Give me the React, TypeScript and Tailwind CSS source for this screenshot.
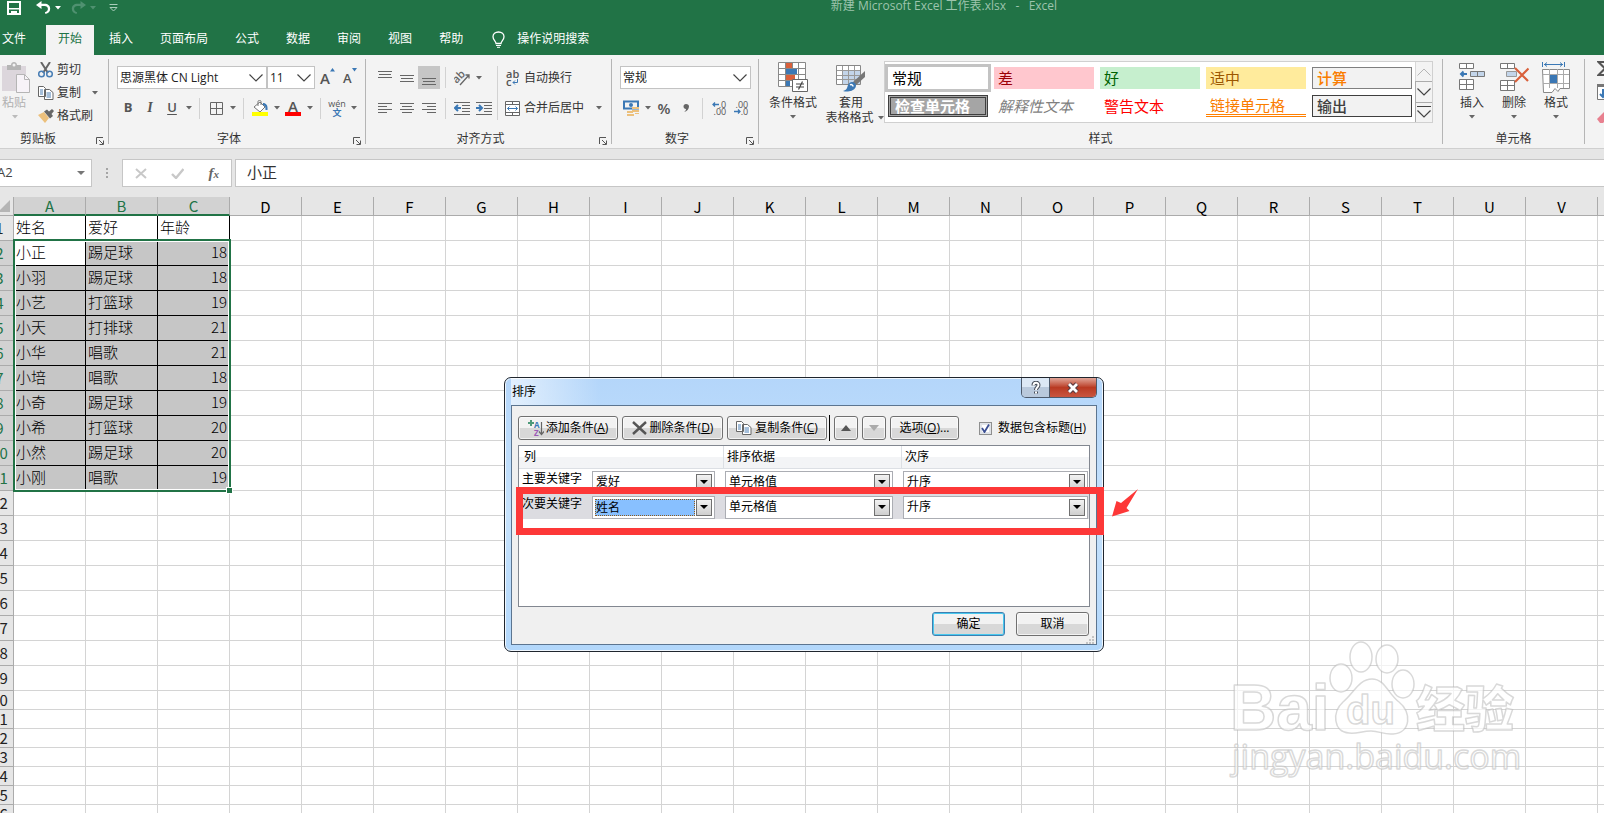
import type { ReactNode } from "react";

const TABS = ["文件", "开始", "插入", "页面布局", "公式", "数据", "审阅", "视图", "帮助"];

const COLUMNS = "ABCDEFGHIJKLMNOPQRSTUVW".split("");

const DATA: string[][] = [
  ["姓名", "爱好", "年龄"],
  ["小正", "踢足球", "18"],
  ["小羽", "踢足球", "18"],
  ["小艺", "打篮球", "19"],
  ["小天", "打排球", "21"],
  ["小华", "唱歌", "21"],
  ["小培", "唱歌", "18"],
  ["小奇", "踢足球", "19"],
  ["小希", "打篮球", "20"],
  ["小然", "踢足球", "20"],
  ["小刚", "唱歌", "19"],
];

const ROWS = Array.from({ length: 26 }, (_, i) => i + 1);

const CELL_STYLES = [
  { label: "常规", cls: "bg-white text-black outline-3 outline-[#c3c3c3]" },
  { label: "差", cls: "bg-[#ffc7ce] text-[#9c0006]" },
  { label: "好", cls: "bg-[#c6efce] text-[#006100]" },
  { label: "适中", cls: "bg-[#ffeb9c] text-[#9c5700]" },
  { label: "计算", cls: "bg-[#f2f2f2] text-[#fa7d00] font-medium border border-[#7f7f7f]" },
  { label: "检查单元格", cls: "bg-[#a5a5a5] text-white font-bold border-3 border-double border-[#3f3f3f]" },
  { label: "解释性文本", cls: "text-[#7f7f7f] italic" },
  { label: "警告文本", cls: "text-[#ff0000]" },
  { label: "链接单元格", cls: "text-[#fa7d00] border-b-3 border-double border-[#ff8001]" },
  { label: "输出", cls: "bg-[#f2f2f2] text-[#3f3f3f] font-medium border border-[#3f3f3f]" },
];

function Svg({ w, h, children }: { w: number; h: number; children: ReactNode }) {
  return (
    <svg width={w} height={h} viewBox={`0 0 ${w} ${h}`} fill="none" className="shrink-0" aria-hidden="true">
      {children}
    </svg>
  );
}

function Caret({ color = "#666" }: { color?: string }) {
  return (
    <Svg w={6} h={4}>
      <path d="M0 0h6L3 3.5z" fill={color} />
    </Svg>
  );
}

function DropButton({ label }: { label: string }) {
  return (
    <button aria-label={label} className="flex h-[22px] w-[11px] items-center justify-center">
      <Caret />
    </button>
  );
}

function IconButton({ label, active = false, children }: { label: string; active?: boolean; children: ReactNode }) {
  return (
    <button
      aria-label={label}
      className={`flex w-[22px] shrink-0 items-center justify-center ${active ? "h-[23px] bg-[#c6c6c6]" : "h-[22px]"}`}
    >
      {children}
    </button>
  );
}

function Sep() {
  return <div className="mx-[5px] h-[21px] w-px shrink-0 bg-[#d2d2d2]" />;
}

function Chevron() {
  return (
    <Svg w={14} h={8}>
      <path d="M.5 .5L7 7l6.500-6.500" stroke="#444" strokeWidth="1.200" />
    </Svg>
  );
}

function RibbonSelect({ label, value, width }: { label: string; value: string; width: string }) {
  return (
    <div className={`relative flex h-[23px] items-center border border-[#c3c3c3] bg-white ${width}`}>
      <select aria-label={label} defaultValue={value} className="h-full w-full appearance-none pl-[2px] text-xs text-[#222] outline-none">
        <option>{value}</option>
      </select>
      <div className="pointer-events-none absolute right-[3px]">
        <Chevron />
      </div>
    </div>
  );
}

function Group({ label, launcher = true, className, children }: { label: string; launcher?: boolean; className: string; children: ReactNode }) {
  return (
    <section aria-label={label} className={`flex h-[93px] shrink-0 flex-col ${className}`}>
      <div className="flex-1">{children}</div>
      <div className="flex h-5 items-center pt-[2px]">
        <span className="flex-1 text-center text-xs leading-4 text-[#333]">{label}</span>
        {launcher && (
          <button aria-label={`${label}设置`} className="flex w-4 justify-center pt-1">
            <Svg w={8} h={8}>
              <path d="M.5 7V.5H7M3 3l4 4M7.500 3.500v4h-4" stroke="#555" />
            </Svg>
          </button>
        )}
      </div>
    </section>
  );
}

function GroupLine() {
  return <div className="mt-1 h-[85px] w-px shrink-0 bg-[#b5b5b5]" />;
}

function Lines({ rows }: { rows: [number, number, number][] }) {
  return (
    <Svg w={14} h={16}>
      {rows.map(([x, y, w]) => (
        <rect key={y} x={x} y={y} width={w} height="1" fill="#666" />
      ))}
    </Svg>
  );
}

function TitleBar() {
  return (
    <header className="flex h-[25px] items-start">
      <div className="flex w-[284px] shrink-0 items-center pl-[7px] pt-px">
        <button aria-label="保存">
          <Svg w={14} h={14}>
            <path d="M1 1h12v12H1z" stroke="#fff" strokeWidth="2" />
            <path d="M2 7h10v1.500H2zM4 10h6v4H8v-2H6v2H4z" fill="#fff" />
          </Svg>
        </button>
        <button aria-label="撤消" className="ml-[15px] flex items-center gap-1">
          <Svg w={15} h={14}>
            <path d="M5.500 0v2.800h3c3.500 0 5.700 2 5.700 5 0 2.800-2 4.600-4.700 5.200l-.6-1.800c1.900-.5 3-1.700 3-3.300 0-1.900-1.300-2.900-3.500-2.900H5.500v3L0 4z" fill="#fff" />
          </Svg>
          <Caret color="#fff" />
        </button>
        <button aria-label="恢复" className="ml-[10px] flex items-center gap-1">
          <Svg w={15} h={14}>
            <path d="M9.500 0v2.800h-3C3 2.800.8 4.800.8 7.800c0 2.800 2 4.600 4.700 5.200l.6-1.800c-1.900-.5-3-1.700-3-3.300C3.100 6 4.400 5 6.600 5h2.900v3L15 4z" fill="#4f9170" />
          </Svg>
          <Caret color="#4f9170" />
        </button>
        <button aria-label="自定义快速访问工具栏" className="ml-[13px]">
          <Svg w={9} h={8}>
            <path d="M.5 .5h8M1 3.500h7L4.500 7z" stroke="#a9cdb9" />
          </Svg>
        </button>
      </div>
      <h1 className="flex-1 text-center text-xs leading-3 text-[#9dc4ad]">
        新建 Microsoft Excel 工作表.xlsx&nbsp;&nbsp; -&nbsp;&nbsp; Excel
      </h1>
    </header>
  );
}

function TabStrip() {
  return (
    <nav className="flex h-[30px] items-stretch gap-[3px] text-xs text-white">
      {TABS.map((tab, i) => (
        <button
          key={tab}
          className={`shrink-0 px-3 pb-[2px] ${i === 0 ? "-ml-[10px] mr-[5px]" : ""} ${i === 1 ? "bg-[#f3f3f3] text-[#217346]" : ""}`}
        >
          {tab}
        </button>
      ))}
      <button className="flex items-center gap-3 pb-[2px] pl-[14px]">
        <Svg w={13} h={17}>
          <path d="M4 12.500c0-2-3-3.500-3-6.700C1 3 3.300 1 6.500 1S12 3 12 5.800c0 3.200-3 4.700-3 6.700z" stroke="#fff" strokeWidth="1.300" />
          <path d="M4 14.500h5M5 16.300h3" stroke="#fff" />
        </Svg>
        操作说明搜索
      </button>
    </nav>
  );
}

function ClipboardGroup() {
  return (
    <Group label="剪贴板" className="-ml-4 w-[124px]">
      <div className="flex pl-[18px] pt-[3px]">
        <button disabled className="flex w-[28px] flex-col items-start pt-1 text-xs leading-4 text-[#b1b1b1]">
          <Svg w={28} h={32}>
            <path d="M0 4h24v25H0z" fill="#dcd6dc" />
            <path d="M5 3h4c0-4 6-4 6 0h4v5H5z" fill="#b5b5b5" />
            <circle cx="12" cy="3" r="1.500" fill="#f3f3f3" />
            <path d="M14.500 12.500h8l5 5v13h-13z" fill="#f7f3f8" stroke="#b5b5b5" />
            <path d="M22.500 12.500v5h5" stroke="#b5b5b5" />
          </Svg>
          <span className="pt-px">粘贴</span>
          <span className="flex w-[26px] justify-center pt-1">
            <Caret color="#bbb" />
          </span>
        </button>
        <div className="ml-2 flex flex-col text-xs text-[#333]">
          <button className="flex h-[23px] items-center gap-[3px]">
            <Svg w={16} h={16}>
              <path d="M3 0l7 11M12 0L5 11" stroke="#666" strokeWidth="2" />
              <circle cx="3.500" cy="12" r="2.800" stroke="#4a7fb5" strokeWidth="1.500" />
              <circle cx="11.500" cy="12" r="2.800" stroke="#4a7fb5" strokeWidth="1.500" />
            </Svg>
            剪切
          </button>
          <button className="flex h-[23px] items-center gap-[3px]">
            <CopyIcon />
            复制
            <span className="pl-2">
              <Caret />
            </span>
          </button>
          <button className="flex h-[23px] items-center gap-[3px]">
            <Svg w={16} h={16}>
              <path d="M0 7l6-3 5 6-4 5z" fill="#ecc07c" />
              <path d="M6 3.500l3-2 2 2L14 1l2 2-2.500 3 1.500 2-3 2.500z" fill="#666" />
            </Svg>
            格式刷
          </button>
        </div>
      </div>
    </Group>
  );
}

function CopyIcon() {
  return (
    <Svg w={16} h={14}>
      <path d="M.5 .5h5l2 2v8h-7zM6.500 3.500h5l3.500 3v7H6.500z" fill="#fff" stroke="#666" />
      <path d="M2 4h3M2 6h3M2 8h3M8.500 7h4.500M8.500 9h4.500M8.500 11h4.500" stroke="#4a7fb5" />
    </Svg>
  );
}

function FontGroup() {
  return (
    <Group label="字体" className="w-[256px]">
      <div className="flex flex-col gap-2 pl-2 pt-[11px] text-[#555]">
        <div className="flex items-center">
          <RibbonSelect label="字体名称" value="思源黑体 CN Light" width="w-[150px]" />
          <RibbonSelect label="字号" value="11" width="w-[48px]" />
          <button aria-label="增大字号" className="ml-[5px] flex w-[22px] items-start">
            <span className="text-[15px] font-semibold leading-5">A</span>
            <Svg w={5} h={4}><path d="M0 3.500L2.500 0 5 3.500z" fill="#3b78b5" /></Svg>
          </button>
          <button aria-label="减小字号" className="flex w-[22px] items-start pl-px">
            <span className="text-[13px] font-semibold leading-5">A</span>
            <Svg w={5} h={4}><path d="M0 0h5L2.500 3.500z" fill="#3b78b5" /></Svg>
          </button>
        </div>
        <div className="flex items-center">
          <IconButton label="加粗"><b className="text-[13px]">B</b></IconButton>
          <IconButton label="倾斜"><i className="font-['Liberation_Serif',serif] text-sm font-bold">I</i></IconButton>
          <IconButton label="下划线"><span className="text-[13px] font-semibold underline underline-offset-2">U</span></IconButton>
          <DropButton label="下划线选项" />
          <Sep />
          <IconButton label="边框">
            <Svg w={13} h={13}><path d="M.5 .5h12v12H.5zM6.500 1v11M1 6.500h11" stroke="#666" /></Svg>
          </IconButton>
          <DropButton label="边框选项" />
          <Sep />
          <IconButton label="填充颜色">
            <Svg w={16} h={16}>
              <path d="M2 7l6-5 5 5-5 5z" fill="#fff" stroke="#777" />
              <path d="M6 6V1.500c0-1.500 3-1.500 3 0V5" stroke="#777" />
              <path d="M11 3c3 0 5 2 4.500 7h-2c0-3 0-4-2.500-5z" fill="#3b78b5" />
              <path d="M0 12h16v4H0z" fill="#ff0" />
            </Svg>
          </IconButton>
          <DropButton label="填充颜色选项" />
          <IconButton label="字体颜色">
            <span className="flex w-4 flex-col items-center border-b-4 border-[#f00] text-[15px] font-semibold leading-3">A</span>
          </IconButton>
          <DropButton label="字体颜色选项" />
          <Sep />
          <IconButton label="拼音指南">
            <span className="flex flex-col items-center text-[9px] leading-[9px]">
              <span>wén</span>
              <span className="font-bold text-[#3b78b5]">文</span>
            </span>
          </IconButton>
          <DropButton label="拼音指南选项" />
        </div>
      </div>
    </Group>
  );
}

function AlignGroup() {
  return (
    <Group label="对齐方式" className="w-[245px]">
      <div className="flex pl-2 pt-[11px]">
        <div className="flex flex-col gap-2">
          <div className="flex h-[23px] items-center">
            <IconButton label="顶端对齐"><Lines rows={[[0, 1, 14], [1, 4, 12], [0, 7, 14]]} /></IconButton>
            <IconButton label="垂直居中"><Lines rows={[[0, 5, 14], [1, 8, 12], [0, 11, 14]]} /></IconButton>
            <IconButton label="底端对齐" active><Lines rows={[[0, 8, 14], [1, 11, 12], [0, 14, 14]]} /></IconButton>
            <Sep />
            <IconButton label="方向">
              <Svg w={16} h={16}>
                <text x="0" y="10" fontSize="11" fontWeight="600" fill="#666" transform="rotate(-45 6 9)">ab</text>
                <path d="M6 15L15 5M11.500 5H15v3.500" stroke="#666" strokeWidth="1.300" />
              </Svg>
            </IconButton>
            <DropButton label="方向选项" />
          </div>
          <div className="flex items-center">
            <IconButton label="左对齐"><Lines rows={[[0, 3, 14], [0, 6, 9], [0, 9, 14], [0, 12, 9]]} /></IconButton>
            <IconButton label="居中"><Lines rows={[[0, 3, 14], [2, 6, 10], [0, 9, 14], [2, 12, 10]]} /></IconButton>
            <IconButton label="右对齐"><Lines rows={[[0, 3, 14], [5, 6, 9], [0, 9, 14], [5, 12, 9]]} /></IconButton>
            <Sep />
            <IconButton label="减少缩进量">
              <Svg w={16} h={14}>
                <path d="M0 1.500h16M8 4.500h8M8 7.500h8M8 10.500h8M0 13.500h16" stroke="#666" />
                <path d="M7 7H1M4 4L1 7l3 3" stroke="#3b78b5" strokeWidth="2" />
              </Svg>
            </IconButton>
            <IconButton label="增加缩进量">
              <Svg w={16} h={14}>
                <path d="M0 1.500h16M8 4.500h8M8 7.500h8M8 10.500h8M0 13.500h16" stroke="#666" />
                <path d="M0 7h6M3 4l3 3-3 3" stroke="#3b78b5" strokeWidth="2" />
              </Svg>
            </IconButton>
          </div>
        </div>
        <div className="mx-[2px] h-[54px] w-px bg-[#d2d2d2]" />
        <div className="flex flex-col gap-2 pl-[5px] text-xs text-[#333]">
          <button className="flex h-[23px] items-center gap-1">
            <Svg w={15} h={16}>
              <text x="1" y="8" fontSize="11" fontWeight="600" fill="#555">ab</text>
              <text x="1" y="16" fontSize="11" fontWeight="600" fill="#555">c</text>
              <path d="M12.500 9v3.500H8M10 10.500l-2 2 2 2" stroke="#3b78b5" />
            </Svg>
            自动换行
          </button>
          <button className="flex h-[22px] items-center gap-1">
            <Svg w={15} h={15}>
              <path d="M.5 .5h14v14H.5zM.5 3.500h14M.5 11.500h14M7.500 .5v3M7.500 11.500v3" fill="#fff" stroke="#666" />
              <path d="M2.500 7.500h10M4.500 5.500l-2 2 2 2M10.500 5.500l2 2-2 2" stroke="#3b78b5" />
            </Svg>
            合并后居中
            <span className="pl-2"><Caret /></span>
          </button>
        </div>
      </div>
    </Group>
  );
}

function NumberGroup() {
  return (
    <Group label="数字" className="w-[146px]">
      <div className="flex flex-col gap-2 pl-2 pt-[11px] text-[#555]">
        <RibbonSelect label="数字格式" value="常规" width="w-[131px]" />
        <div className="flex items-center">
          <IconButton label="会计数字格式">
            <Svg w={16} h={16}>
              <path d="M1 1.500h14v7H1z" stroke="#3b78b5" strokeWidth="2" />
              <circle cx="8" cy="5" r="2" fill="#3b78b5" />
              <path d="M9 7h7v2H9zM9 10h7v2H9zM4 11h6v2H4zM4 14h7v2H4zM12 13h4v1h-4z" fill="#ecc07c" />
            </Svg>
          </IconButton>
          <DropButton label="会计格式选项" />
          <IconButton label="百分比样式"><span className="text-[15px] font-semibold">%</span></IconButton>
          <IconButton label="千位分隔样式">
            <Svg w={6} h={8}><path d="M3 0c2 0 3 1 3 2.500C6 5 4 7.500 1 8 2.500 7 3 6 3 5 1.500 5 .5 4 .5 2.500S1.500 0 3 0z" fill="#666" /></Svg>
          </IconButton>
          <Sep />
          <IconButton label="增加小数位数">
            <span className="flex flex-col items-end text-[9px] leading-[7px]">
              <span className="flex items-center">
                <Svg w={7} h={5}><path d="M7 2.500H1M3 .5l-2 2 2 2" stroke="#3b78b5" strokeWidth="1.300" /></Svg>.0
              </span>
              <span>.00</span>
            </span>
          </IconButton>
          <IconButton label="减少小数位数">
            <span className="flex flex-col items-end text-[9px] leading-[7px]">
              <span>.00</span>
              <span className="flex items-center">
                <Svg w={7} h={5}><path d="M0 2.500h6M4 .5l2 2-2 2" stroke="#3b78b5" strokeWidth="1.300" /></Svg>.0
              </span>
            </span>
          </IconButton>
        </div>
      </div>
    </Group>
  );
}

function StylesGroup() {
  return (
    <Group label="样式" launcher={false} className="w-[683px]">
      <div className="flex pl-[9px] pt-[6px] text-xs leading-4 text-[#333]">
        <button className="flex w-[50px] shrink-0 flex-col items-center whitespace-nowrap pt-px">
          <Svg w={30} h={33}>
            <path d="M.5 .5h27v24H.5z" fill="#fff" />
            <path d="M8 1h6v5H8z" fill="#d9603b" />
            <path d="M8 7h11v5H8z" fill="#3b78b5" />
            <path d="M8 13h9v5H8z" fill="#d9603b" />
            <path d="M8 19h4v5H8z" fill="#3b78b5" />
            <path d="M.5 .5h27v24H.5zM7.500 1v23M14.500 1v5M20.500 1v23M1 6.500h26M1 12.500h26M1 18.500h26" stroke="#888" />
            <path d="M14.500 17.500h15v12h-15z" fill="#fff" stroke="#666" />
            <path d="M18 22h8M18 25h8M24.500 19.500l-4 8" stroke="#444" strokeWidth="1.200" />
          </Svg>
          <span>条件格式</span>
          <span className="flex h-3 items-center"><Caret /></span>
        </button>
        <button className="flex w-[66px] shrink-0 flex-col items-center whitespace-nowrap pt-px">
          <Svg w={30} h={33}>
            <path d="M.5 3.500h24v19H.5z" fill="#fff" stroke="#888" />
            <path d="M7 8h17v14H7z" fill="#c3d5ea" />
            <path d="M6.500 4v18M12.500 4v18M18.500 4v18M1 8.500h23M1 13.500h23M1 17.500h23" stroke="#999" />
            <path d="M29 9v6L19 24l-3-3z" fill="#777" />
            <path d="M16 20c3 0 5 3 3.500 5.500C17 30 10 30 7 29c4-1 4-3 5-6 .8-2 2.500-3 4-3z" fill="#3b78b5" />
            <path d="M14 23c1.500-1 3 0 3 1.500" stroke="#fff" strokeWidth="1.500" />
          </Svg>
          <span>套用</span>
          <span className="flex h-[14px] items-center gap-1 pl-[7px]">表格格式 <Caret /></span>
        </button>
        <div className="flex h-[62px] shrink-0 border border-[#d0d0d0] bg-white font-['Noto_Sans_CJK_SC',sans-serif]">
          <div className="grid grid-cols-5 content-start gap-[6px] px-[3px] pt-[5px]">
            {CELL_STYLES.map((s) => (
              <button key={s.label} className={`flex h-[22px] w-[100px] items-center px-1 text-[15px] ${s.cls}`}>
                {s.label}
              </button>
            ))}
          </div>
          <div className="flex w-[17px] flex-col bg-[#f3f3f3]">
            <button aria-label="上一行" className="flex flex-1 items-center justify-center border-l border-[#d8d8d8]">
              <Svg w={14} h={8}><path d="M.5 7.500L7 1l6.500 6.500" stroke="#b5b5b5" /></Svg>
            </button>
            <button aria-label="下一行" className="flex flex-1 items-center justify-center border border-r-0 border-[#ababab]">
              <Chevron />
            </button>
            <button aria-label="其他样式" className="flex flex-1 items-center justify-center border-l border-[#ababab]">
              <Svg w={14} h={12}><path d="M0 .5h14M.5 4.500L7 11l6.500-6.500" stroke="#444" strokeWidth="1.200" /></Svg>
            </button>
          </div>
        </div>
      </div>
    </Group>
  );
}

function CellsButton({ label, children }: { label: string; children: ReactNode }) {
  return (
    <button className="flex w-[42px] flex-col items-center">
      {children}
      <span>{label}</span>
      <span className="flex h-3 items-center"><Caret /></span>
    </button>
  );
}

function CellsGroup() {
  return (
    <Group label="单元格" launcher={false} className="w-[141px]">
      <div className="flex pl-2 pt-[7px] text-xs leading-4 text-[#333]">
        <CellsButton label="插入">
          <Svg w={28} h={33}>
            <path d="M1.500 1.500h14v5h-14zM8.500 1.500v5M1.500 17.500h14v10h-14zM8.500 17.500v10M1.500 22.500h14" fill="#fff" stroke="#777" />
            <path d="M12.500 9.500h14v5h-14zM19.500 9.500v5" fill="#c3d5ea" stroke="#777" />
            <path d="M9 12H3M5.500 9.500L3 12l2.500 2.500" stroke="#3b78b5" strokeWidth="2" />
          </Svg>
        </CellsButton>
        <CellsButton label="删除">
          <Svg w={30} h={33}>
            <path d="M1.500 1.500h14v5h-14zM8.500 1.500v5M1.500 18.500h14v10h-14zM8.500 18.500v10M1.500 23.500h14" fill="#fff" stroke="#777" />
            <path d="M7.500 9.500h10v5h-10z" fill="#c3d5ea" stroke="#999" />
            <path d="M16 6l13 13M29.500 6.500L16 20" stroke="#d9603b" strokeWidth="2.200" />
          </Svg>
        </CellsButton>
        <CellsButton label="格式">
          <Svg w={28} h={33}>
            <path d="M.5 0v5M22.500 0v5M2 2.500h19M5 .5l-2.500 2L5 4.500M18 .5l2.500 2-2.500 2" stroke="#3b78b5" />
            <path d="M.5 7.500h27v19H18l-2 3-3-3-3 4H1.500z" fill="#fff" stroke="#888" />
            <path d="M7.500 7v19M15.500 7v19M21.500 7v19M1 12.500h26M1 21.500h26" stroke="#aaa" />
            <path d="M8 13h7v8H8z" fill="#3b78b5" />
          </Svg>
        </CellsButton>
      </div>
    </Group>
  );
}

function EditGroup() {
  return (
    <div className="flex w-4 shrink-0 flex-col gap-2 pl-3 pt-[6px]">
      <button aria-label="自动求和">
        <Svg w={16} h={15}><path d="M14 3V1H1.500L8 7.500 1.500 14H14v-2" stroke="#555" strokeWidth="2" /></Svg>
      </button>
      <button aria-label="填充">
        <Svg w={16} h={16}>
          <path d="M.5 .5h15v15H.5z" fill="#fff" stroke="#777" />
          <path d="M0 0h16v3H0z" fill="#777" />
          <path d="M6 5v8M3 10l3 3 3-3" stroke="#3b78b5" strokeWidth="2" />
        </Svg>
      </button>
      <button aria-label="清除">
        <Svg w={16} h={15}><path d="M0 11l9-9 6 4-9 9H3z" fill="#e8808f" /></Svg>
      </button>
    </div>
  );
}

function FormulaBar() {
  return (
    <div className="flex h-12 shrink-0 items-start bg-[#e6e6e6] pt-[10px] text-[#444]">
      <div className="-ml-[10px] flex h-7 w-[102px] shrink-0 items-center border border-[#c6c6c6] bg-white pr-[6px]">
        <input aria-label="名称框" defaultValue="A2" className="w-0 flex-1 pl-[6px] text-[13px] outline-none" />
        <Svg w={8} h={4}><path d="M0 0h8L4 4z" fill="#777" /></Svg>
      </div>
      <div className="flex h-7 w-[30px] shrink-0 items-center justify-center">
        <Svg w={2} h={11}><path d="M0 0h2v2H0zM0 4h2v2H0zM0 8h2v2H0z" fill="#a5a5a5" /></Svg>
      </div>
      <div className="flex h-7 w-[110px] shrink-0 items-center justify-between border border-[#c6c6c6] bg-white px-3">
        <button aria-label="取消编辑">
          <Svg w={12} h={11}><path d="M1 1l10 9M11 1L1 10" stroke="#c8c8c8" strokeWidth="2" /></Svg>
        </button>
        <button aria-label="输入">
          <Svg w={13} h={11}><path d="M1 6l4 4 7.500-9" stroke="#c8c8c8" strokeWidth="2.400" /></Svg>
        </button>
        <button aria-label="插入函数" className="font-['Liberation_Serif',serif] text-[15px] font-bold italic leading-5 text-[#666]">
          f<span className="text-[11px]">x</span>
        </button>
      </div>
      <input
        aria-label="编辑栏"
        defaultValue="小正"
        className="ml-[3px] h-7 min-w-0 flex-1 border border-r-0 border-[#c6c6c6] bg-white pb-1 pl-[11px] font-['Noto_Sans_CJK_SC',sans-serif] text-[15px] text-[#333] outline-none"
      />
    </div>
  );
}

function cellClass(row: number, col: number) {
  const inData = row <= DATA.length && col < 3;
  if (!inData) return "border-[#d4d4d4]";
  const fill = row === 1 || (row === 2 && col === 0) ? "bg-white" : "bg-[#c6c6c6]";
  return `border-black ${fill} ${col === 2 && row > 1 ? "text-right" : ""}`;
}

function Sheet() {
  return (
    <main className="relative flex-1 overflow-hidden bg-white font-['Noto_Sans_CJK_SC',sans-serif] text-[15px] leading-[18px]">
      <table className="-ml-[14px] w-[1684px] table-fixed border-separate border-spacing-0">
        <thead>
          <tr className="h-[19px]">
            <th className="w-7 border-b border-r border-[#ababab] bg-[#e6e6e6] p-0">
              <div className="flex justify-end pr-[3px]">
                <Svg w={12} h={12}><path d="M12 0v12H0z" fill="#b5b5b5" /></Svg>
              </div>
            </th>
            {COLUMNS.map((c, i) => (
              <th
                key={c}
                scope="col"
                className={`w-[72px] border-r p-0 align-bottom font-normal leading-4 ${
                  i < 3 ? "border-b-2 border-r-[#ababab] border-b-[#217346] bg-[#d2d2d2] text-[#217346]" : "border-b border-[#ababab] bg-[#e6e6e6] text-black"
                }`}
              >
                {c}
              </th>
            ))}
          </tr>
        </thead>
        <tbody>
          {ROWS.map((r) => (
            <tr key={r} className={r < 20 ? "h-[25px]" : "h-[19px]"}>
              <th
                scope="row"
                className={`border-b border-r border-[#ababab] p-0 font-normal ${
                  r > 1 && r < 12 ? "bg-[#d2d2d2] text-[#217346]" : "bg-[#e6e6e6] text-[#222]"
                }`}
              >
                {r}
              </th>
              {COLUMNS.map((c, i) => (
                <td key={c} className={`border-b border-r px-[2px] py-0 align-top font-light text-black ${cellClass(r, i)}`}>
                  {DATA[r - 1]?.[i] && <div className="leading-[22px]">{DATA[r - 1][i]}</div>}
                </td>
              ))}
            </tr>
          ))}
        </tbody>
      </table>
      {/* selection frame with fill handle */}
      <div className="pointer-events-none absolute left-[13px] top-[42px] h-[253px] w-[218px] border-2 border-[#217346] inset-ring inset-ring-white">
        <div className="absolute -bottom-1 -right-1 h-[7px] w-[7px] border border-white bg-[#217346]" />
      </div>
    </main>
  );
}

function DialogButton({ label, className, children }: { label?: string; className: string; children: ReactNode }) {
  return (
    <button
      aria-label={label}
      className={`flex h-6 shrink-0 items-center justify-center rounded-[3px] border bg-linear-to-b from-[#f2f2f2] from-50% to-[#d8d8d8] to-50% inset-ring ${className}`}
    >
      {children}
    </button>
  );
}

function DialogSelect({ label, value, focused = false }: { label: string; value: string; focused?: boolean }) {
  return (
    <div className="flex h-[23px] items-center border border-[#abadb3] bg-white p-[2px]">
      <select
        aria-label={label}
        defaultValue={value}
        className={`h-full min-w-0 flex-1 appearance-none text-xs leading-4 outline-none ${
          focused ? "border border-dotted border-[#8a5a1e] bg-[#88c0ff]" : "pl-px"
        }`}
      >
        <option>{value}</option>
      </select>
      <span className="ml-px flex h-full w-4 items-center justify-center border border-[#707070] bg-linear-to-b from-[#f2f2f2] to-[#cfcfcf]">
        <Svg w={8} h={4}><path d="M0 0h8L4 4z" fill="#000" /></Svg>
      </span>
    </div>
  );
}

const GRAY_BUTTON = "border-[#707070] inset-ring-white/70";

function SortDialog() {
  return (
    <div
      role="dialog"
      aria-label="排序"
      className="absolute left-[504px] top-[377px] flex h-[275px] w-[600px] flex-col rounded-[7px] border border-[#20262e] bg-linear-to-b from-[#b4d6fa] via-[#c6e2fc] to-[#b2d7fb] px-[6px] pb-[6px] text-xs text-black inset-ring inset-ring-white/80"
    >
      <div className="flex h-7 items-start justify-between bg-linear-to-r from-white/60 to-transparent to-15%">
        <h2 className="pl-px pt-[6px] leading-4">排序</h2>
        <div className="flex h-5 overflow-hidden rounded-b-[5px] border border-t-0 border-[#4d5a6b]">
          <button aria-label="帮助" className="flex w-7 items-center justify-center border-r border-[#4d5a6b] bg-linear-to-b from-[#dce8f5] from-50% to-[#b9c9dc] to-50%">
            <Svg w={10} h={14}>
              <path d="M2.500 4.500c0-3.500 5-3.500 5-.5C7.500 6.500 5 6 5 9M5 10.500v2" stroke="#444b57" strokeWidth="4" />
              <path d="M2.500 4.500c0-3.500 5-3.500 5-.5C7.500 6.500 5 6 5 9M5 10.500v2" stroke="#fff" strokeWidth="2" />
            </Svg>
          </button>
          <button aria-label="关闭" className="flex w-[46px] items-center justify-center bg-linear-to-b from-[#e0a598] to-[#c9553f] via-[#b93a22]">
            <Svg w={14} h={12}>
              <path d="M3 2l8 8M11 2l-8 8" stroke="#5b3a3f" strokeWidth="5" />
              <path d="M3 2l8 8M11 2l-8 8" stroke="#fff" strokeWidth="2.800" />
            </Svg>
          </button>
        </div>
      </div>

      <div className="flex flex-1 flex-col border border-[#5c7590] bg-[#f0f0f0] px-[6px] pt-[9px]">
        <div className="flex items-center gap-1">
          <DialogButton className={`w-[100px] gap-[2px] ${GRAY_BUTTON}`}>
            <Svg w={16} h={16}>
              <path d="M3 0v6M0 3h6" stroke="#4d9a7a" strokeWidth="2" />
              <text x="6" y="8" fontSize="8" fontWeight="700" fill="#3b78b5">A</text>
              <text x="6" y="16" fontSize="8" fontWeight="700" fill="#9b59b6">Z</text>
              <path d="M13.500 2v12M11 11.500l2.500 3 2.500-3" stroke="#666" strokeWidth="1.200" />
            </Svg>
            <span>添加条件(<u>A</u>)</span>
          </DialogButton>
          <DialogButton className={`w-[101px] gap-[3px] ${GRAY_BUTTON}`}>
            <Svg w={15} h={14}><path d="M1 1l13 12M14 1L1 13" stroke="#555" strokeWidth="2.400" /></Svg>
            <span>删除条件(<u>D</u>)</span>
          </DialogButton>
          <DialogButton className={`w-[100px] gap-[3px] ${GRAY_BUTTON}`}>
            <CopyIcon />
            <span>复制条件(<u>C</u>)</span>
          </DialogButton>
          <div className="-ml-[2px] h-[26px] w-px bg-black" />
          <DialogButton label="上移" className={`w-6 ${GRAY_BUTTON}`}>
            <Svg w={10} h={6}><path d="M0 6h10L5 0z" fill="#555" /></Svg>
          </DialogButton>
          <DialogButton label="下移" className={`w-6 ${GRAY_BUTTON}`}>
            <Svg w={10} h={6}><path d="M0 0h10L5 6z" fill="#aaa" /></Svg>
          </DialogButton>
          <DialogButton className={`w-[69px] ${GRAY_BUTTON}`}>
            <span>选项(<u>O</u>)...</span>
          </DialogButton>
          <div className="ml-4 flex items-center gap-[6px]">
            <span className="relative flex">
              <input id="has-header" type="checkbox" defaultChecked className="h-[13px] w-[13px] appearance-none border border-[#8e8f8f] bg-white inset-ring-2 inset-ring-[#e0e3e8]" />
              <span className="pointer-events-none absolute left-[2px] top-[2px]">
                <Svg w={9} h={9}><path d="M1 4l2.500 4L8 .5" stroke="#3b4f94" strokeWidth="1.800" /></Svg>
              </span>
            </span>
            <label htmlFor="has-header" className="whitespace-nowrap">数据包含标题(<u>H</u>)</label>
          </div>
        </div>

        <div className="mt-1 h-[162px] border border-[#828790] bg-white">
          <table className="w-[570px] table-fixed border-separate border-spacing-0 text-left">
            <colgroup>
              <col className="w-[73px]" />
              <col className="w-[132px]" />
              <col className="w-[178px]" />
              <col />
            </colgroup>
            <thead>
              <tr className="h-[23px] bg-linear-to-b from-white from-50% to-[#f3f4f6] to-50%">
                <th colSpan={2} className="border-b border-r border-[#dcdfe4] p-0 pl-[5px] font-normal">列</th>
                <th className="border-b border-r border-[#dcdfe4] p-0 pl-[3px] font-normal">排序依据</th>
                <th className="border-b border-[#dcdfe4] p-0 pl-[3px] font-normal">次序</th>
              </tr>
            </thead>
            <tbody>
              {[
                { name: "主要关键字", col: "爱好", row: "" },
                { name: "次要关键字", col: "姓名", row: "bg-[#dcdce1]" },
              ].map((k, i) => (
                <tr key={k.name} className={`h-[25px] ${k.row}`}>
                  <th scope="row" className="p-0 pl-[3px] align-top font-normal leading-5">{k.name}</th>
                  <td className="p-0 pr-[9px] pt-px"><DialogSelect label={`${k.name}列`} value={k.col} focused={i === 1} /></td>
                  <td className="p-0 pl-px pr-[9px] pt-px"><DialogSelect label={`${k.name}排序依据`} value="单元格值" /></td>
                  <td className="p-0 pl-px pr-px pt-px"><DialogSelect label={`${k.name}次序`} value="升序" /></td>
                </tr>
              ))}
            </tbody>
          </table>
        </div>

        <div className="flex justify-end gap-[11px] pr-px pt-[5px]">
          <DialogButton className="w-[73px] border-[#3c7fb1] inset-ring-[#48c8ee]">确定</DialogButton>
          <DialogButton className={`w-[73px] ${GRAY_BUTTON}`}>取消</DialogButton>
        </div>
        <div className="-mr-1 flex justify-end">
          <Svg w={8} h={8}>
            <path d="M6 0h2v2H6zM3 3h2v2H3zM6 3h2v2H6zM0 6h2v2H0zM3 6h2v2H3zM6 6h2v2H6z" fill="#c4c4c4" />
          </Svg>
        </div>
      </div>
    </div>
  );
}

function Annotation() {
  return (
    <>
      <div className="pointer-events-none absolute left-[516px] top-[487px] h-[48px] w-[588px] border-7 border-[#fd3838]" />
      <div className="pointer-events-none absolute left-[1112px] top-[489px]">
        <Svg w={27} h={28}>
          <path d="M0 27.500L4.500 12l4.500 2L26 0 14.500 19l3 3z" fill="#fd3838" />
        </Svg>
      </div>
    </>
  );
}

function Watermark() {
  return (
    <div className="pointer-events-none absolute left-[1225px] top-[635px]">
      <svg
        width="310"
        height="150"
        viewBox="0 0 310 150"
        fill="#fff"
        fillOpacity="0.7"
        stroke="#b4b4b4"
        strokeOpacity="0.5"
        strokeWidth="1.500"
        strokeLinejoin="round"
      >
        <text x="5" y="95" fontSize="64" fontWeight="700" className="font-['Liberation_Sans',sans-serif]">Bai</text>
        <ellipse cx="116" cy="43" rx="11" ry="14" />
        <ellipse cx="136" cy="22" rx="11" ry="15" />
        <ellipse cx="162" cy="24" rx="11" ry="14" />
        <ellipse cx="178" cy="49" rx="11" ry="14" />
        <path d="M147 44c13 0 16 15 27 23 13 10 12 31-6 32-9 1-13-3-22-3s-14 3-22 2c-16-1-17-21-6-31 11-9 16-23 29-23z" />
        <text x="121" y="89" fontSize="40" fontWeight="700" className="font-['Liberation_Sans',sans-serif]">du</text>
        <text x="191" y="92" fontSize="49" fontWeight="900" className="font-['Noto_Sans_CJK_SC',sans-serif]">经验</text>
        <text x="7" y="134" fontSize="34" className="font-['Open_Sans',sans-serif]">jingyan.baidu.com</text>
      </svg>
    </div>
  );
}

export default function App() {
  return (
    <div className="relative flex h-screen flex-col overflow-hidden bg-white font-['Open_Sans','Noto_Sans_CJK_SC',sans-serif]">
      <div className="shrink-0 bg-[#217346]">
        <TitleBar />
        <TabStrip />
      </div>
      <div className="flex h-[94px] shrink-0 overflow-hidden border-b border-[#cfcfcf] bg-[#f3f3f3]">
        <ClipboardGroup />
        <GroupLine />
        <FontGroup />
        <GroupLine />
        <AlignGroup />
        <GroupLine />
        <NumberGroup />
        <GroupLine />
        <StylesGroup />
        <GroupLine />
        <CellsGroup />
        <GroupLine />
        <EditGroup />
      </div>
      <FormulaBar />
      <Sheet />
      <SortDialog />
      <Annotation />
      <Watermark />
    </div>
  );
}
